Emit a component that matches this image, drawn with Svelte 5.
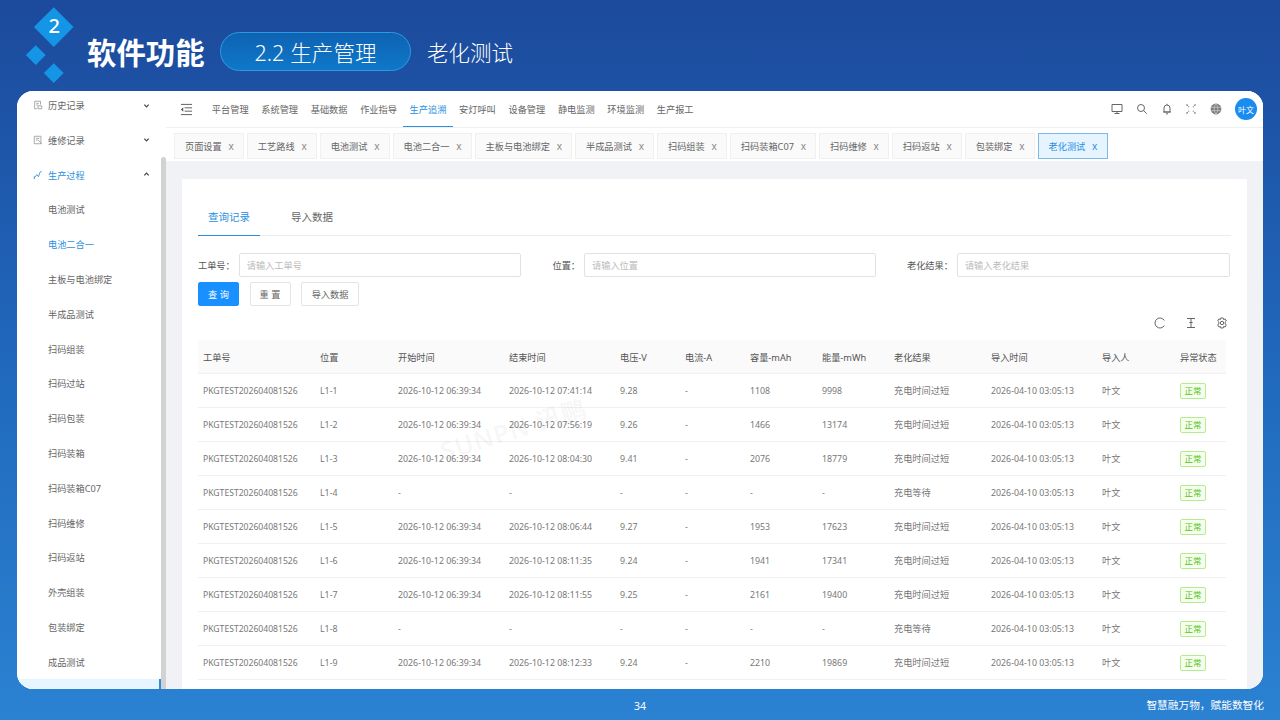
<script>
  const side = [
    { t: '电池测试' }, { t: '电池二合一', on: true }, { t: '主板与电池绑定' }, { t: '半成品测试' },
    { t: '扫码组装' }, { t: '扫码过站' }, { t: '扫码包装' }, { t: '扫码装箱' }, { t: '扫码装箱C07' },
    { t: '扫码维修' }, { t: '扫码返站' }, { t: '外壳组装' }, { t: '包装绑定' }, { t: '成品测试' }
  ];
  const nav = ['平台管理', '系统管理', '基础数据', '作业指导', '生产追溯', '安灯呼叫', '设备管理', '静电监测', '环境监测', '生产报工'];
  const tabs = ['页面设置', '工艺路线', '电池测试', '电池二合一', '主板与电池绑定', '半成品测试', '扫码组装', '扫码装箱C07', '扫码维修', '扫码返站', '包装绑定', '老化测试'];
  const head = ['工单号', '位置', '开始时间', '结束时间', '电压-V', '电流-A', '容量-mAh', '能量-mWh', '老化结果', '导入时间', '导入人', '异常状态'];
  const raw = [
    ['L1-1', '07:41:14', '9.28', '1108', '9998'],
    ['L1-2', '07:56:19', '9.26', '1466', '13174'],
    ['L1-3', '08:04:30', '9.41', '2076', '18779'],
    ['L1-4'],
    ['L1-5', '08:06:44', '9.27', '1953', '17623'],
    ['L1-6', '08:11:35', '9.24', '1941', '17341'],
    ['L1-7', '08:11:55', '9.25', '2161', '19400'],
    ['L1-8'],
    ['L1-9', '08:12:33', '9.24', '2210', '19869']
  ];
  const rows = raw.map((r) => r.length > 1
    ? [r[0], '2026-10-12 06:39:34', '2026-10-12 ' + r[1], r[2], '-', r[3], r[4]]
    : [r[0], '-', '-', '-', '-', '-', '-']);
</script>

<div class="page">
  <header class="top">
    <div class="logo">
      <div class="dia big"><span>2</span></div>
      <div class="dia s1"></div>
      <div class="dia s2"></div>
    </div>
    <h1>软件功能</h1>
    <div class="pill">2.2 生产管理</div>
    <div class="sub">老化测试</div>
  </header>

  <div class="win">
    <aside class="side">
      <div class="list">
        <div class="item">
          <svg class="ic" viewBox="0 0 12 12"><path d="M2 1.500h7v4M2 1.500v9h3M4 4h3M4 6h2M6 7h4.500v3.500H6z" /></svg>
          <span>历史记录</span>
          <svg class="chev" viewBox="0 0 8 8"><path d="M1.500 3l2.500 2.500L6.500 3" /></svg>
        </div>
        <div class="item">
          <svg class="ic" viewBox="0 0 12 12"><path d="M1.500 1.500h8v9h-8zM3.500 4h4M3.500 6h2M6 6l4.500 4.500" /></svg>
          <span>维修记录</span>
          <svg class="chev" viewBox="0 0 8 8"><path d="M1.500 3l2.500 2.500L6.500 3" /></svg>
        </div>
        <div class="item open">
          <svg class="ic" viewBox="0 0 12 12"><path d="M1.500 11V7.500M1.500 9.500L4.500 5.500l2 2.500 2-5.500M8.500 2.500l2-1" /></svg>
          <span>生产过程</span>
          <svg class="chev" viewBox="0 0 8 8"><path d="M1.500 5L4 2.500 6.500 5" /></svg>
        </div>
        {#each side as s}
          <div class="item leaf" class:on={s.on}><span>{s.t}</span></div>
        {/each}
        <div class="item leaf cur"></div>
      </div>
      <div class="bar"></div>
    </aside>

    <main class="main">
      <div class="topbar">
        <svg class="fold" viewBox="0 0 14 14"><path d="M1 1.500h12M5 5.200h8M5 8.800h8M1 12.500h12" /><path class="fill" d="M3.500 4.500L1 7l2.500 2.500z" /></svg>
        <nav class="nav">
          {#each nav as n, i}
            <div class="nav-i" class:on={i === 4}>{n}</div>
          {/each}
        </nav>
        <div class="tools">
          <svg viewBox="0 0 12 12"><path d="M1 1.500h10v7H1zM6 8.500V10.500M3.500 10.500h5" /></svg>
          <svg viewBox="0 0 12 12"><circle cx="5" cy="5" r="3.500" /><path d="M7.500 7.500l3.200 3.200" /></svg>
          <svg viewBox="0 0 12 12"><path d="M3 9V5a3 3 0 0 1 6 0v4zM2 9h8M5 10.800h2M6 .8v1.200" /></svg>
          <svg class="full" viewBox="0 0 12 12"><path d="M1.500 1.500l2.500 2.500M10.500 1.500L8 4M1.500 10.500L4 8M10.500 10.500L8 8" /></svg>
          <svg viewBox="0 0 12 12"><circle cx="6" cy="6" r="5.400" class="globe" /><path class="w" d="M1 4.300h10M1 7.700h10M6 .8c-2.500 3-2.500 7.400 0 10.400M6 .8c2.500 3 2.500 7.400 0 10.400" /></svg>
          <div class="avatar">叶文</div>
        </div>
      </div>

      <div class="tabs">
        {#each tabs as t, i}
          <div class="tab" class:on={i === tabs.length - 1}>{t}<span class="x">x</span></div>
        {/each}
      </div>

      <div class="content">
        <section class="card">
          <div class="ctabs">
            <div class="ctab on">查询记录</div>
            <div class="ctab">导入数据</div>
          </div>

          <div class="form">
            <div class="field"><label for="f1">工单号：</label><input id="f1" placeholder="请输入工单号" /></div>
            <div class="field"><label for="f2">位置：</label><input id="f2" placeholder="请输入位置" /></div>
            <div class="field"><label for="f3">老化结果：</label><input id="f3" placeholder="请输入老化结果" /></div>
          </div>

          <div class="btns">
            <button class="btn pri">查 询</button>
            <button class="btn">重 置</button>
            <button class="btn wide">导入数据</button>
          </div>

          <div class="tbar">
            <svg viewBox="0 0 12 12"><path d="M10.300 3.500A5 5 0 1 0 10.300 8.500" /></svg>
            <svg viewBox="0 0 12 12"><path d="M2 1.500h8M2 10.500h8M6 1.500v9M4.300 5.500h3.400" /></svg>
            <svg viewBox="0 0 12 12"><path d="M4.800 1h2.400l.4 1.500 1.500-.5 1.200 2-1.100 1.100v1.800l1.100 1.100-1.200 2-1.500-.5L7.200 11H4.800l-.4-1.500-1.500.5-1.200-2 1.100-1.100V5.100L1.700 4l1.200-2 1.500.5z" /><circle cx="6" cy="6" r="1.700" /></svg>
          </div>

          <div class="table">
            <div class="tr th">
              {#each head as h}<div class="td">{h}</div>{/each}
            </div>
            {#each rows as r, i}
              <div class="tr body">
                <div class="td pk">PKGTEST202604081526</div>
                {#each r as c}<div class="td">{c}</div>{/each}
                <div class="td cn">{raw[i].length > 1 ? '充电时间过短' : '充电等待'}</div>
                <div class="td">2026-04-10 03:05:13</div>
                <div class="td cn">叶文</div>
                <div class="td"><span class="tag">正常</span></div>
              </div>
            {/each}
          </div>

          <div class="mark">SUNPN 讯鹏</div>
        </section>
      </div>
    </main>
  </div>

  <footer class="foot">
    <span class="num">34</span>
    <span class="slogan">智慧融万物，赋能数智化</span>
  </footer>
</div>

<style>
  :global(body) { margin: 0; }
  .page {
    width: 1280px; height: 720px; overflow: hidden;
    display: flex; flex-direction: column;
    background: linear-gradient(180deg, #1c4a9c 0%, #2068bc 50%, #2b82d2 100%);
    font-family: "Noto Sans", "Noto Sans CJK SC", sans-serif;
    color: #666;
  }

  .top { height: 91px; flex: none; display: flex; align-items: center; padding: 11px 0 0 87px; box-sizing: border-box; color: #fff; position: relative; }
  .logo { position: absolute; left: 0; top: 0; width: 80px; height: 91px; }
  .dia { position: absolute; background: #1595e6; transform: rotate(45deg); }
  .big { left: 40.300px; top: 13px; width: 27.500px; height: 27.500px; display: flex; align-items: center; justify-content: center; }
  .big span { transform: rotate(-45deg); color: #fff; font-size: 20px; font-weight: 500; line-height: 1; margin: -1px 0 0 -1px; }
  .s1 { left: 29px; top: 48.300px; width: 13.500px; height: 13.500px; }
  .s2 { left: 46.600px; top: 66px; width: 13.500px; height: 13.500px; }
  h1 { margin: 0; font-size: 29.400px; font-weight: 700; line-height: 40px; font-family: "Noto Sans CJK SC", sans-serif; width: 133px; }
  .pill {
    width: 191px; height: 39px; box-sizing: border-box; border-radius: 20px;
    border: 1px solid #2b9be0; background: linear-gradient(180deg, #0e62b4, #0f78c8);
    display: flex; align-items: center; justify-content: center;
    font-size: 21.500px; font-weight: 300; letter-spacing: .1px;
  }
  .sub { margin-left: 16px; font-size: 21.500px; font-weight: 300; }

  .win { height: 598px; flex: none; margin: 0 17px; display: flex; background: #fff; border-radius: 16px; overflow: hidden; }

  .side { width: 149px; flex: none; display: flex; background: #fff; }
  .list { width: 144px; flex: none; margin-top: -3.400px; }
  .bar { width: 5px; margin-top: 66px; background: #d2d2d2; border-radius: 3px 3px 0 0; }
  .item { height: 34.810px; display: flex; align-items: center; padding-left: 16px; box-sizing: border-box; font-size: 9.200px; position: relative; color: #666; }
  .item.open { color: #2b8fe0; }
  .item.leaf { padding-left: 31px; }
  .item.on { color: #2b8fe0; }
  .item.cur { background: #e6f5ff; border-right: 2px solid #2b8fe0; }
  .ic { width: 10px; height: 10px; margin-right: 5px; fill: none; stroke: #999; stroke-width: 1; }
  .open .ic { stroke: #2b8fe0; }
  .chev { position: absolute; left: 126px; top: 14px; width: 7px; height: 7px; fill: none; stroke: #444; stroke-width: 1.400; }

  .main { flex: 1; min-width: 0; display: flex; flex-direction: column; background: #f0f2f5; }

  .topbar { height: 37px; flex: none; background: #fff; display: flex; align-items: center; border-bottom: 1px solid #f0f0f0; box-sizing: border-box; }
  .fold { width: 13px; height: 13px; margin-left: 14px; fill: none; stroke: #555; stroke-width: 1; flex: none; }
  .fold .fill { fill: #555; stroke: none; }
  .nav { display: flex; height: 100%; margin-left: 12.500px; }
  .nav-i { width: 49.450px; display: flex; align-items: center; justify-content: center; font-size: 9.200px; color: #666; box-sizing: border-box; padding-bottom: 1px; }
  .nav-i.on { color: #2b8fe0; border-bottom: 1px solid #2b8fe0; padding-bottom: 0; }
  .tools { margin-left: auto; display: flex; align-items: center; padding-right: 6px; }
  .tools svg { width: 12px; height: 12px; margin-right: 12.800px; fill: none; stroke: #666; stroke-width: 1; flex: none; }
  .tools .full { stroke-width: 1.200; stroke-dasharray: 1.600 1.200; }
  .tools .globe { fill: #7c7c7c; stroke: none; }
  .tools .w { stroke: #ddd; stroke-width: .6; }
  .avatar { width: 22px; height: 22px; border-radius: 50%; background: #1a8cf0; color: #fff; font-size: 8px; display: flex; align-items: center; justify-content: center; }

  .tabs { height: 33px; flex: none; background: #fff; display: flex; align-items: flex-start; padding: 5px 0 0 8px; box-sizing: border-box; gap: 3px; }
  .tab { height: 26px; padding: 0 9px 0 10px; display: flex; align-items: center; box-sizing: border-box; background: #fafafa; border: 1px solid #f0f0f0; font-size: 9.200px; color: #666; white-space: nowrap; }
  .tab .x { margin-left: 6.800px; color: #888; font-size: 10px; }
  .tab.on { background: #e6f4ff; border-color: #7db9e4; color: #2b8fe0; padding-right: 10px; }
  .tab.on .x { color: #2b8fe0; }

  .content { flex: 1; min-height: 0; padding: 18px 16px 0; display: flex; }
  .card { flex: 1; background: #fff; padding: 0 16px; box-sizing: border-box; position: relative; overflow: hidden; }

  .ctabs { display: flex; height: 57px; align-items: flex-end; border-bottom: 1px solid #ececec; box-sizing: border-box; }
  .ctab { width: 62px; height: 37px; display: flex; align-items: center; justify-content: center; font-size: 10.500px; color: #666; margin-right: 21px; box-sizing: border-box; padding-bottom: 2px; margin-bottom: -1px; border-bottom: 1px solid transparent; }
  .ctab.on { color: #2b8fe0; border-bottom-color: #2b8fe0; }

  .form { display: grid; grid-template-columns: repeat(3, 323px); column-gap: 31.500px; margin-top: 17px; }
  .field { display: flex; align-items: center; height: 24px; }
  label { font-size: 9.200px; color: #555; white-space: nowrap; margin-right: 4px; }
  input { flex: 1; min-width: 0; height: 24px; box-sizing: border-box; border: 1px solid #e2e2e2; border-radius: 2px; padding: 0 7px; font-size: 9.200px; font-family: inherit; background: #fff; outline: none; }
  input::placeholder { color: #bbb; }

  .btns { display: flex; gap: 10.500px; margin-top: 5px; }
  .btn { width: 41px; height: 24px; padding: 0; border: 1px solid #e4e4e4; border-radius: 2px; background: #fff; font-family: inherit; font-size: 9.200px; color: #666; }
  .btn.pri { background: #1890ff; border-color: #1890ff; color: #fff; }
  .btn.wide { width: 58px; }

  .tbar { height: 34px; display: flex; align-items: center; justify-content: flex-end; padding-right: 3px; gap: 19px; }
  .tbar svg { width: 12px; height: 12px; fill: none; stroke: #666; stroke-width: 1; margin-bottom: 1px; }

  .table { width: 1028px; font-size: 8.800px; }
  .tr { display: grid; grid-template-columns: 117px 78px 111px 111px 65px 65px 72px 72px 97px 111px 78px 51px; height: 34px; align-items: center; border-bottom: 1px solid #f0f0f0; box-sizing: border-box; color: #777; }
  .th { background: #fafafa; color: #555; font-size: 9.200px; }
  .td { padding-left: 5px; white-space: nowrap; }
  .body .td { padding-top: 1px; }
  .pk { font-size: 8.600px; }
  .cn { font-size: 9.200px; line-height: 12px; }
  .tag { display: block; width: 26px; height: 16px; line-height: 14px; box-sizing: border-box; text-align: center; background: #f6ffed; border: 1px solid #b7eb8f; border-radius: 2px; color: #52c41a; font-size: 8.500px; margin-top: -1px; }

  .mark { position: absolute; left: 331px; top: 249px; font-size: 25px; font-weight: 600; letter-spacing: 1px; color: rgba(0, 0, 0, .05); transform: translate(-50%, -50%) rotate(-17deg); white-space: nowrap; pointer-events: none; }

  .foot { flex: 1; position: relative; display: flex; align-items: center; justify-content: center; color: #fff; padding-top: 3px; }
  .num { font-size: 10.500px; }
  .slogan { position: absolute; right: 16px; top: 8px; font-size: 10.700px; }
</style>
